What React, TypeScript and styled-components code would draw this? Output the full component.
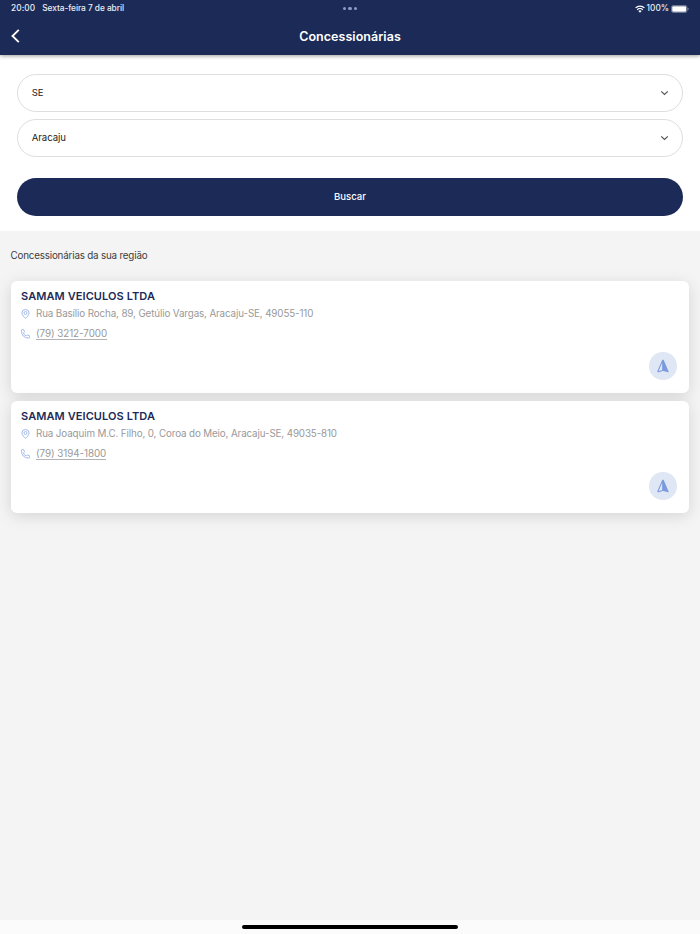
import React from 'react';
import styled, { createGlobalStyle } from 'styled-components';

const GlobalStyle = createGlobalStyle`
  * { box-sizing: border-box; }
  body { margin: 0; background: #f4f4f4; }
  button, a { font: inherit; color: inherit; }
`;

const Screen = styled.div`
  width: 700px;
  height: 934px;
  overflow: hidden;
  display: flex;
  flex-direction: column;
  background: #f4f4f4;
  font-family: Inter, 'Liberation Sans', sans-serif;
`;

const Header = styled.header`
  position: relative;
  z-index: 1;
  flex: none;
  height: 55px;
  background: #1b2a56;
  color: #fff;
  box-shadow: 0 1px 4px rgba(0, 0, 0, 0.4);
`;

const StatusBar = styled.div`
  height: 17px;
  padding: 0 11px;
  display: grid;
  grid-template-columns: 1fr auto 1fr;
  align-items: center;
  font-size: 8.3px;
  line-height: 17px;
  font-weight: 500;
  color: #eceef4;
`;

const StatusLeft = styled.div`
  display: flex;
  gap: 7px;
`;

const StatusText = styled.span<{ $spacing: number }>`
  letter-spacing: ${({ $spacing }) => $spacing}px;
  white-space: nowrap;
`;

const Dots = styled.div`
  display: flex;
  gap: 2px;
  i {
    width: 3.5px;
    height: 3.5px;
    border-radius: 50%;
    background: #8c9cc9;
  }
`;

const StatusRight = styled.div`
  display: flex;
  justify-content: flex-end;
  align-items: center;
  gap: 2px;
  svg { display: block; }
`;

const NavBar = styled.div`
  height: 38px;
  display: grid;
  grid-template-columns: 40px 1fr 40px;
  align-items: center;
`;

const BackButton = styled.button`
  border: 0;
  background: none;
  padding: 0 0 0 10px;
  display: flex;
`;

const Title = styled.h1`
  margin: 0;
  padding-top: 1px;
  text-align: center;
  font-size: 12.5px;
  line-height: 20px;
  font-weight: 600;
  letter-spacing: 0.04px;
`;

const SearchPanel = styled.section`
  flex: none;
  height: 176px;
  padding: 19px 17.3px 0;
  background: #fff;
`;

const Select = styled.button`
  width: 100%;
  height: 38.4px;
  margin: 0 0 6.7px;
  padding: 0 13px 0 13.5px;
  display: flex;
  align-items: center;
  justify-content: space-between;
  border: 1px solid #dedede;
  border-radius: 20px;
  background: #fff;
  color: #222;
  font-size: 9.6px;
  line-height: 14px;
  letter-spacing: -0.08px;
`;

const SubmitButton = styled.button`
  width: 100%;
  height: 38.4px;
  margin-top: 13.6px;
  border: 0;
  border-radius: 20px;
  background: #1b2a56;
  color: #fff;
  font-size: 9.6px;
  font-weight: 500;
  letter-spacing: 0;
`;

const Results = styled.main`
  flex: 1;
  padding: 17px 11px 0;
`;

const ResultsTitle = styled.h2`
  margin: 0 0 18px -0.5px;
  font-size: 9.8px;
  line-height: 15px;
  font-weight: 400;
  letter-spacing: -0.18px;
  color: #3c3c3c;
`;

const Card = styled.article`
  height: 112px;
  margin-bottom: 8px;
  padding: 8px 12.5px 13px 10px;
  display: flex;
  flex-direction: column;
  border-radius: 6px;
  background: #fff;
  box-shadow: 0 3px 16px rgba(0, 0, 0, 0.13);
`;

const DealerName = styled.h3`
  margin: 0 0 2px;
  font-size: 11px;
  line-height: 15px;
  font-weight: 600;
  letter-spacing: 0.09px;
  color: #1b2a56;
`;

const InfoRow = styled.div`
  height: 15px;
  margin-bottom: 5px;
  display: flex;
  align-items: center;
  gap: 6px;
  font-size: 9.8px;
  line-height: 15px;
  color: #999;
  svg { flex: none; }
`;

const Address = styled.span`
  letter-spacing: -0.12px;
  white-space: nowrap;
`;

const Phone = styled.a`
  line-height: 11px;
  letter-spacing: -0.04px;
  border-bottom: 1px solid #b2b2b2;
  text-decoration: none;
`;

const RouteButton = styled.button`
  width: 27.6px;
  height: 27.6px;
  margin: auto 0 0 auto;
  padding: 0;
  border: 0;
  border-radius: 50%;
  display: flex;
  align-items: center;
  justify-content: center;
  background: #dfe6f4;
`;

const HomeArea = styled.footer`
  flex: none;
  height: 14px;
  padding-top: 4.5px;
  background: #fbfbfb;
`;

const HomeIndicator = styled.div`
  width: 216px;
  height: 4px;
  margin: 0 auto;
  border-radius: 2px;
  background: #000;
`;

const WifiIcon = () => (
  <svg width="10" height="8" viewBox="0 0 10 8" fill="none" stroke="#fff" strokeWidth="1.3">
    <path d="M.6 2.9a6.3 6.3 0 0 1 8.8 0M2.2 4.7a4 4 0 0 1 5.6 0" />
    <path d="M5 7.7 3.4 6.1a2.3 2.3 0 0 1 3.2 0Z" fill="#fff" stroke="none" />
  </svg>
);

const BatteryIcon = () => (
  <svg width="18" height="8" viewBox="0 0 18 8">
    <rect x=".4" y=".4" width="15.6" height="7.2" rx="2.2" fill="none" stroke="#8d95ab" strokeWidth=".8" />
    <rect x="1.2" y="1.2" width="14" height="5.6" rx="1.2" fill="#fff" />
    <path d="M16.7 2.8q1 .3 1 1.2t-1 1.2Z" fill="#8d95ab" />
  </svg>
);

const BackIcon = () => (
  <svg width="11" height="14" viewBox="0 0 11 14" fill="none" stroke="#fff" strokeWidth="1.9">
    <path d="M8.8 .9 2.5 7l6.3 6.1" />
  </svg>
);

const ChevronIcon = () => (
  <svg width="9" height="6" viewBox="0 0 9 6" fill="none" stroke="#555" strokeWidth="1.25">
    <path d="m1.2 1.4 3.3 3 3.3-3" />
  </svg>
);

const PinIcon = () => (
  <svg width="9" height="10" viewBox="0 0 9 10" fill="none" stroke="#8eabe2" strokeWidth=".8">
    <path d="M4.5 9.5C3.6 8.3.9 6.1.9 4.1a3.6 3.6 0 0 1 7.2 0c0 2-2.7 4.2-3.6 5.4Z" />
    <circle cx="4.5" cy="4" r="1.5" />
  </svg>
);

const PhoneIcon = () => (
  <svg width="9" height="10" viewBox="0 0 9 10" fill="none" stroke="#8eabe2" strokeWidth=".8" strokeLinejoin="round">
    <path d="M.4 1.2Q.5.6 1.1.6h1.2q.5 0 .6.4l.5 1.8q.1.4-.3.7l-.7.5q.9 2.1 2.9 3l.6-.7q.3-.3.7-.2l1.7.5q.4.1.4.6v1.2q0 .7-.6.7Q.4 9 .4 1.2Z" />
  </svg>
);

const RouteIcon = () => (
  <svg width="12" height="14" viewBox="0 0 12 14">
    <path d="M5.9.5Q6.5.5 6.8 1.3L11.6 12.4q.2 1-.7.8L5.9 11.8Z" fill="#7b9add" />
    <path d="M5.7 1.2.9 12.3q-.1.5.4.4l4.4-1.2Z" fill="none" stroke="#7b9add" strokeWidth="1.05" strokeLinejoin="round" />
  </svg>
);

const dealers = [
  {
    name: 'SAMAM VEICULOS LTDA',
    address: 'Rua Basílio Rocha, 89, Getúlio Vargas, Aracaju-SE, 49055-110',
    phone: '(79) 3212-7000',
  },
  {
    name: 'SAMAM VEICULOS LTDA',
    address: 'Rua Joaquim M.C. Filho, 0, Coroa do Meio, Aracaju-SE, 49035-810',
    phone: '(79) 3194-1800',
  },
];

export default function App() {
  return (
    <Screen>
      <GlobalStyle />
      <Header>
        <StatusBar>
          <StatusLeft>
            <StatusText $spacing={0.1}>20:00</StatusText>
            <StatusText $spacing={-0.04}>Sexta-feira 7 de abril</StatusText>
          </StatusLeft>
          <Dots><i /><i /><i /></Dots>
          <StatusRight>
            <WifiIcon />
            <StatusText $spacing={0}>100%</StatusText>
            <BatteryIcon />
          </StatusRight>
        </StatusBar>
        <NavBar>
          <BackButton aria-label="Voltar"><BackIcon /></BackButton>
          <Title>Concessionárias</Title>
        </NavBar>
      </Header>
      <SearchPanel>
        <Select>SE<ChevronIcon /></Select>
        <Select>Aracaju<ChevronIcon /></Select>
        <SubmitButton>Buscar</SubmitButton>
      </SearchPanel>
      <Results>
        <ResultsTitle>Concessionárias da sua região</ResultsTitle>
        {dealers.map((dealer) => (
          <Card key={dealer.phone}>
            <DealerName>{dealer.name}</DealerName>
            <InfoRow><PinIcon /><Address>{dealer.address}</Address></InfoRow>
            <InfoRow><PhoneIcon /><Phone href="#">{dealer.phone}</Phone></InfoRow>
            <RouteButton aria-label="Traçar rota"><RouteIcon /></RouteButton>
          </Card>
        ))}
      </Results>
      <HomeArea><HomeIndicator /></HomeArea>
    </Screen>
  );
}
